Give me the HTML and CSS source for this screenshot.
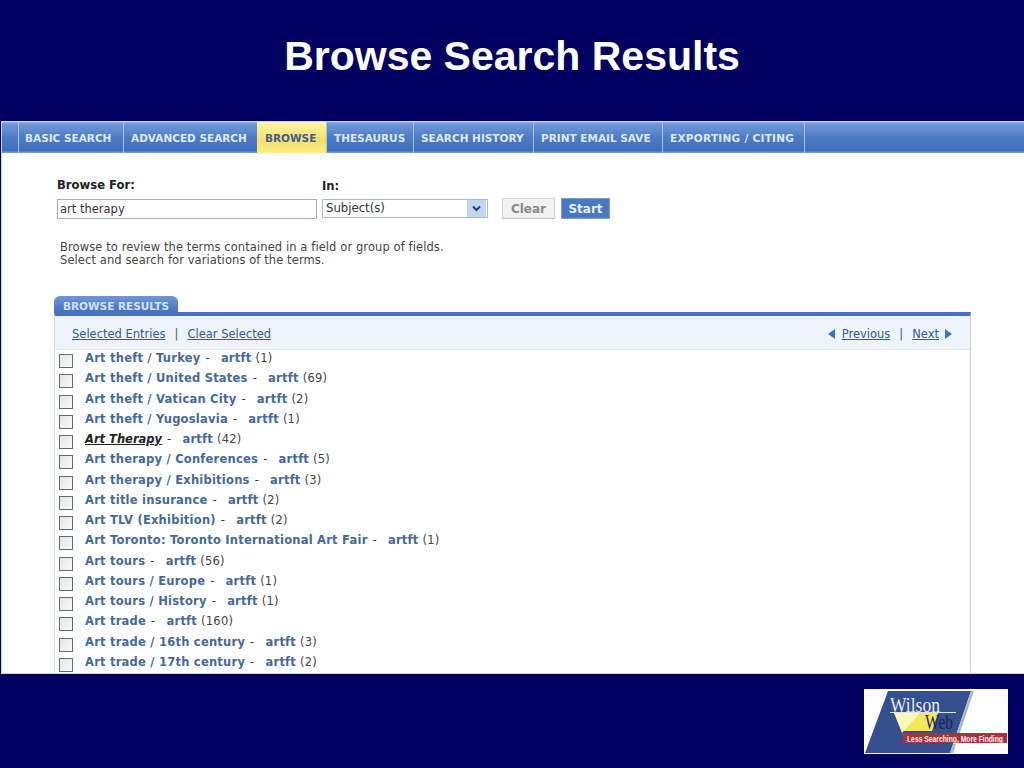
FILE: index.html
```html
<!DOCTYPE html>
<html lang="en">
<head>
<meta charset="utf-8">
<title>Browse Search Results</title>
<link rel="stylesheet" href="styles.css">
</head>
<body>
<div class="slide">
  <h1 class="title">Browse Search Results</h1>
  <div class="panel">
    <nav class="nav">
      <a class="tab t1">BASIC SEARCH</a>
      <a class="tab t2">ADVANCED SEARCH</a>
      <a class="tab t3 active">BROWSE</a>
      <a class="tab t4">THESAURUS</a>
      <a class="tab t5">SEARCH HISTORY</a>
      <a class="tab t6">PRINT EMAIL SAVE</a>
      <a class="tab t7">EXPORTING / CITING</a>
    </nav>
    <div class="form">
      <div class="field field-for">
        <label class="label">Browse For:</label>
        <div class="input">art therapy</div>
      </div>
      <div class="field field-in">
        <label class="label">In:</label>
        <div class="select">Subject(s)
          <span class="arrow"><svg width="9" height="7" viewBox="0 0 9 7"><path d="M1 1.5 L4.5 5 L8 1.5" fill="none" stroke="#27406f" stroke-width="2"/></svg></span>
        </div>
      </div>
      <div class="btn clear">Clear</div>
      <div class="btn start">Start</div>
    </div>
    <p class="help">Browse to review the terms contained in a field or group of fields.<br>Select and search for variations of the terms.</p>
    <section class="results">
      <div class="results-tab">BROWSE RESULTS</div>
      <div class="toolbar">
        <div class="tools-left"><a class="link">Selected Entries</a><span class="sep">|</span><a class="link">Clear Selected</a></div>
        <div class="tools-right">
          <svg class="tri" width="7" height="10" viewBox="0 0 7 10"><path d="M7 0 V10 L0 5 Z" fill="#3f72c4"/></svg>
          <a class="link">Previous</a><span class="sep">|</span><a class="link">Next</a>
          <svg class="tri" width="7" height="10" viewBox="0 0 7 10"><path d="M0 0 V10 L7 5 Z" fill="#3f72c4"/></svg>
        </div>
      </div>
      <ul class="list">
        <li class="row"><span class="check"></span><a class="term">Art theft / Turkey</a><span class="dash">-</span><a class="db">artft</a><span class="count">(1)</span></li>
        <li class="row"><span class="check"></span><a class="term">Art theft / United States</a><span class="dash">-</span><a class="db">artft</a><span class="count">(69)</span></li>
        <li class="row"><span class="check"></span><a class="term">Art theft / Vatican City</a><span class="dash">-</span><a class="db">artft</a><span class="count">(2)</span></li>
        <li class="row"><span class="check"></span><a class="term">Art theft / Yugoslavia</a><span class="dash">-</span><a class="db">artft</a><span class="count">(1)</span></li>
        <li class="row"><span class="check"></span><a class="term current">Art Therapy</a><span class="dash">-</span><a class="db">artft</a><span class="count">(42)</span></li>
        <li class="row"><span class="check"></span><a class="term">Art therapy / Conferences</a><span class="dash">-</span><a class="db">artft</a><span class="count">(5)</span></li>
        <li class="row"><span class="check"></span><a class="term">Art therapy / Exhibitions</a><span class="dash">-</span><a class="db">artft</a><span class="count">(3)</span></li>
        <li class="row"><span class="check"></span><a class="term">Art title insurance</a><span class="dash">-</span><a class="db">artft</a><span class="count">(2)</span></li>
        <li class="row"><span class="check"></span><a class="term">Art TLV (Exhibition)</a><span class="dash">-</span><a class="db">artft</a><span class="count">(2)</span></li>
        <li class="row"><span class="check"></span><a class="term">Art Toronto: Toronto International Art Fair</a><span class="dash">-</span><a class="db">artft</a><span class="count">(1)</span></li>
        <li class="row"><span class="check"></span><a class="term">Art tours</a><span class="dash">-</span><a class="db">artft</a><span class="count">(56)</span></li>
        <li class="row"><span class="check"></span><a class="term">Art tours / Europe</a><span class="dash">-</span><a class="db">artft</a><span class="count">(1)</span></li>
        <li class="row"><span class="check"></span><a class="term">Art tours / History</a><span class="dash">-</span><a class="db">artft</a><span class="count">(1)</span></li>
        <li class="row"><span class="check"></span><a class="term">Art trade</a><span class="dash">-</span><a class="db">artft</a><span class="count">(160)</span></li>
        <li class="row"><span class="check"></span><a class="term">Art trade / 16th century</a><span class="dash">-</span><a class="db">artft</a><span class="count">(3)</span></li>
        <li class="row"><span class="check"></span><a class="term">Art trade / 17th century</a><span class="dash">-</span><a class="db">artft</a><span class="count">(2)</span></li>
      </ul>
    </section>
  </div>
  <footer class="footer">
    <svg class="logo" width="144" height="65" viewBox="0 0 144 65" role="img" aria-label="WilsonWeb">
      <rect width="144" height="65" fill="#fff"/>
      <path d="M24 2 H107 L86 64 H1 Z" fill="#36508f"/>
      <path d="M107 2 H110 L89 64 H86 Z" fill="#aab4cf"/>
      <path d="M30 24 H74 L68 42 H40 Z" fill="#f4e75e"/>
      <path d="M30 24 H56 L38 44 Z" fill="#fff7b8"/>
      <path d="M26 23.5 H92" stroke="#dfe4f0" stroke-width="1"/>
      <rect x="39" y="44" width="104" height="10" fill="#a5343a"/>
      <text class="logo-w1" x="26" y="23" textLength="50" lengthAdjust="spacingAndGlyphs">Wilson</text>
      <text class="logo-w2" x="61" y="40" textLength="28" lengthAdjust="spacingAndGlyphs">Web</text>
      <text class="logo-tag" x="43" y="52.5" textLength="96" lengthAdjust="spacingAndGlyphs">Less Searching, More Finding</text>
    </svg>
  </footer>
</div>
</body>
</html>
```
FILE: styles.css
```css
* { box-sizing: border-box; }
html, body { margin: 0; padding: 0; }
body { background: #000060; font-family: "DejaVu Sans", Verdana, sans-serif; }
.slide { width: 1024px; height: 768px; display: flex; flex-direction: column; background: #000060; overflow: hidden; }
.title { margin: 0; height: 121px; padding-top: 30px; text-align: center; color: #fff; font: bold 41px/52px "Liberation Sans", Arial, sans-serif; flex: none; }
.panel { margin-left: 1px; height: 553px; flex: none; background: #fff; overflow: hidden; border-top: 1px solid #c9d6ea; border-left: 1px solid #c8d0e0; border-bottom: 1px solid #cfd4e0; }

.nav { height: 31px; display: flex; padding-left: 16px; background: linear-gradient(#8fb0e2 0, #6f97d6 8%, #4d7cc6 50%, #3f6ebd 92%, #7e9fd4 100%); }
.tab { display: flex; align-items: center; padding-left: 7px; color: #dfe8f6; font-size: 10.5px; font-weight: bold; border-left: 1px solid #a9c2e8; white-space: nowrap; height: 100%; }
.t1 { width: 105px; padding-left: 6px; } .t2 { width: 134px; } .t3 { width: 69px; } .t4 { width: 87px; } .t5 { width: 120px; } .t6 { width: 129px; }
.t7 { width: 143px; border-right: 1px solid #a9c2e8; letter-spacing: 0.28px; }
.tab.active { background: linear-gradient(#fdf5a8, #f6e06a 60%, #fbeb8a); color: #3d5d94; border-left: 0; padding-left: 8px; }

.form { display: flex; align-items: flex-end; padding: 26px 0 0 55px; height: 66px; }
.field { display: flex; flex-direction: column; }
.field-for { width: 260px; }
.field-in { width: 166px; margin-left: 5px; position: relative; top: -1px; }
.label { font-size: 11.6px; font-weight: bold; color: #222; line-height: 13px; margin-bottom: 7px; }
.field-in .label { margin-bottom: 6px; }
.input { height: 20px; border: 1px solid #9fb0c6; font-size: 11.5px; line-height: 18px; padding-left: 2px; color: #333; }
.select { height: 19px; border: 1px solid #a9b8cc; font-size: 11.7px; line-height: 16px; padding-left: 3px; color: #333; position: relative; }
.arrow { position: absolute; right: 1px; top: 0; width: 19px; height: 17px; background: #c3d5f3; display: flex; align-items: center; justify-content: center; }
.btn { height: 21px; font-size: 12px; font-weight: bold; display: flex; align-items: center; justify-content: center; }
.clear { width: 53px; margin-left: 14px; color: #8a8a8a; background: #f1f1f1; border: 1px solid #d4d4d4; border-bottom-color: #bbb; }
.start { width: 49px; margin-left: 6px; color: #e9eff9; background: #4a78c2; border: 1px solid #7f9fd0; }

.help { margin: 0; padding: 22px 0 0 58px; font-size: 11.5px; letter-spacing: 0.09px; line-height: 13px; color: #444; height: 77px; }

.results { margin: 0 0 0 52px; width: 917px; }
.results-tab { width: 124px; height: 16px; background: linear-gradient(#6f97d6, #4672bf); border-radius: 6px 6px 0 0; color: #d5e0f2; font-size: 10.5px; font-weight: bold; line-height: 20px; padding-left: 9px; }
.toolbar { height: 38px; border-top: 4px solid #4672bf; background: #eef3fc; border-bottom: 1px solid #e0e7f2; border-left: 1px solid #d4dbe6; border-right: 1px solid #c8ced8; display: flex; justify-content: space-between; align-items: center; padding: 3px 18px 0 17px; font-size: 11.5px; }
.tools-left, .tools-right { display: flex; align-items: center; }
.link { color: #2f5c9c; text-decoration: underline; }
.sep { margin: 0 9px; color: #555; }
.tri { margin-right: 7px; }
.tools-right .tri:last-child { margin: 0 0 0 6px; }

.list { list-style: none; margin: 0; padding: 0; border-left: 1px solid #d4dbe6; border-right: 1px solid #c8ced8; height: 330px; font-size: 11.5px; line-height: 16px; letter-spacing: 0.23px; }
.row { height: 20.27px; display: flex; align-items: flex-start; white-space: nowrap; }
.check { width: 14px; height: 14px; margin: 4px 0 0 4px; border: 1px solid #5a6a80; background: linear-gradient(135deg, #e6e6e2, #f8f8f6); flex: none; }
.term { margin-left: 12px; color: #44699b; font-weight: bold; }
.term.current { color: #222; font-style: italic; text-decoration: underline; letter-spacing: 0; }
.dash { margin: 0 11px 0 5px; color: #333; }
.db { color: #44699b; font-weight: bold; }
.count { margin-left: 4px; color: #444; }

.footer { flex: 1; display: flex; justify-content: flex-end; padding: 15px 16px 0 0; }
.logo { display: block; }
.logo-w1 { font: 20px "Liberation Serif", serif; fill: #e8ecf6; }
.logo-w2 { font: 21px "Liberation Serif", serif; fill: #1c2550; }
.logo-tag { font: bold 9px "Liberation Sans", Arial, sans-serif; fill: #fbeeee; }
```
